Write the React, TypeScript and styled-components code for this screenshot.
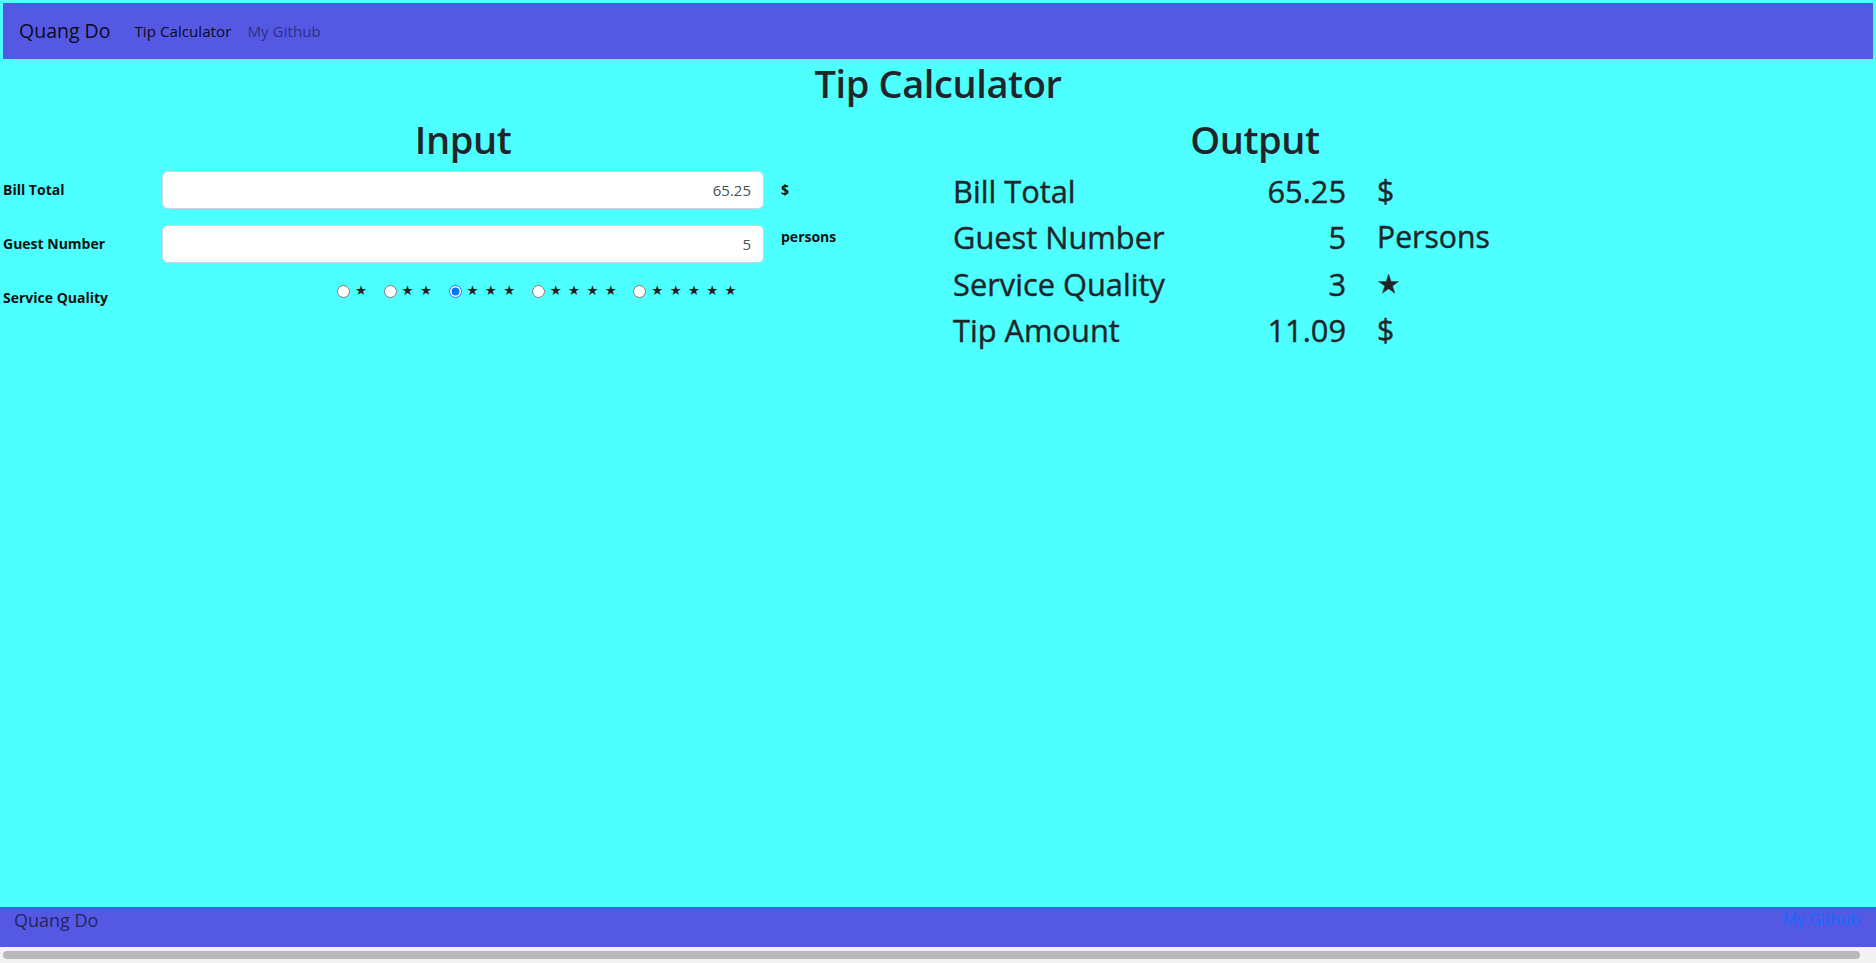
import React from "react";
import styled, { createGlobalStyle } from "styled-components";

const GlobalStyle = createGlobalStyle`
  html, body {
    margin: 0;
    padding: 0;
    height: 100%;
    overflow: hidden;
    background: #4dffff;
  }
  body {
    font-family: "Open Sans", "Noto Sans", sans-serif;
    color: #212529;
  }
  * { box-sizing: border-box; }
`;

const Shell = styled.div`
  height: 100vh;
  display: flex;
  flex-direction: column;
`;

const Main = styled.div`
  flex: 1;
  padding: 3px 3px 0 3px;
`;

const NavBar = styled.nav`
  height: 56px;
  background: #5458e3;
  display: flex;
  align-items: center;
  padding: 0 12px 0 16px;
`;

const Brand = styled.a`
  font-size: 19.5px;
  line-height: 30px;
  color: rgba(0, 0, 0, 0.9);
  text-decoration: none;
  margin-right: 16px;
`;

const NavLink = styled.a<{ $active?: boolean }>`
  font-size: 15.2px;
  line-height: 24px;
  padding: 8px;
  text-decoration: none;
  color: ${(p) => (p.$active ? "rgba(0,0,0,0.9)" : "rgba(0,0,0,0.48)")};
`;

const Title = styled.h1`
  margin: 0 0 8px;
  font-size: 38px;
  font-weight: 600;
  letter-spacing: -0.4px;
  line-height: 48px;
  text-align: center;
`;

const Columns = styled.div`
  display: grid;
  grid-template-columns: 920px 1fr;
`;

const SectionHeading = styled.h1<{ $width?: number }>`
  margin: 0 0 8px;
  font-size: 38px;
  font-weight: 600;
  letter-spacing: -0.4px;
  line-height: 48px;
  text-align: center;
  width: ${(p) => (p.$width ? `${p.$width}px` : "auto")};
`;

const FormRow = styled.div`
  display: grid;
  grid-template-columns: 159px 602px 1fr;
  align-items: start;
  margin-bottom: 16px;
`;

const FieldLabel = styled.label`
  font-size: 14px;
  font-weight: 700;
  line-height: 24px;
  padding-top: 7px;
  color: #111;
`;

const Unit = styled.span<{ $top: number }>`
  font-size: 14px;
  font-weight: 700;
  line-height: 24px;
  padding-left: 17px;
  padding-top: ${(p) => p.$top}px;
  color: #111;
`;

const TextInput = styled.input`
  width: 602px;
  height: 38px;
  border: 1px solid #ced4da;
  border-radius: 6px;
  background: #fff;
  padding: 6px 12px;
  font-family: inherit;
  font-size: 15px;
  color: #495057;
  text-align: right;
  outline: none;
`;

const RadioGroup = styled.div`
  grid-column: 2 / 4;
  display: flex;
  align-items: center;
  height: 24px;
  gap: 11.6px;
  padding-left: 170px;
`;

const RadioOption = styled.label`
  display: inline-flex;
  align-items: center;
`;

const Radio = styled.input`
  width: 13px;
  height: 13px;
  margin: 0 3px 0 5px;
`;

const Stars = styled.span`
  display: inline-flex;
  gap: 6.3px;
  margin-left: 2px;
  font-family: "DejaVu Sans", sans-serif;
  font-size: 13.4px;
  line-height: 24px;
  color: #222;
`;

const OutputColumn = styled.div`
  padding-left: 30px;
`;

const OutputGrid = styled.div`
  display: grid;
  grid-template-columns: 259px 103px auto;
  column-gap: 31px;
  margin-top: -3px;
  font-size: 30.8px;
  font-weight: 400;
  -webkit-text-stroke: 0.4px #212529;
  line-height: 46.3px;
  color: #212529;
`;

const OutLabel = styled.div``;
const OutValue = styled.div`
  text-align: right;
`;
const OutUnit = styled.div<{ $star?: boolean }>`
  font-family: ${(p) => (p.$star ? '"DejaVu Sans", sans-serif' : "inherit")};
  font-size: ${(p) => (p.$star ? "26px" : "30.2px")};
`;

const Footer = styled.footer`
  height: 40px;
  background: #5458e3;
  display: flex;
  justify-content: space-between;
  align-items: flex-start;
  padding: 0 16px 0 14px;
`;

const FooterBrand = styled.span`
  font-size: 18px;
  line-height: 27px;
  color: rgba(0, 0, 0, 0.62);
`;

const FooterLink = styled.a`
  font-size: 16px;
  line-height: 24px;
  color: #0d6efd;
  text-decoration: none;
`;

const ScrollTrack = styled.div`
  height: 16px;
  background: #f3f3f3;
  display: flex;
  align-items: center;
  padding: 0 16px 0 3px;
`;

const ScrollThumb = styled.div`
  flex: 1;
  height: 8px;
  border-radius: 4px;
  background: #b9b9b9;
`;

const rows = [
  { label: "Bill Total", value: "65.25", unit: "$" },
  { label: "Guest Number", value: "5", unit: "Persons" },
  { label: "Service Quality", value: "3", unit: "★", star: true },
  { label: "Tip Amount", value: "11.09", unit: "$" },
];

export default function App() {
  return (
    <Shell>
      <GlobalStyle />
      <Main>
        <NavBar>
          <Brand href="#">Quang Do</Brand>
          <NavLink $active href="#">
            Tip Calculator
          </NavLink>
          <NavLink href="#">My Github</NavLink>
        </NavBar>
        <Title>Tip Calculator</Title>
        <Columns>
          <div>
            <SectionHeading>Input</SectionHeading>
            <FormRow>
              <FieldLabel>Bill Total</FieldLabel>
              <TextInput type="text" defaultValue="65.25" />
              <Unit $top={7}>$</Unit>
            </FormRow>
            <FormRow>
              <FieldLabel>Guest Number</FieldLabel>
              <TextInput type="text" defaultValue="5" />
              <Unit $top={0}>persons</Unit>
            </FormRow>
            <FormRow>
              <FieldLabel>Service Quality</FieldLabel>
              <RadioGroup>
                {[1, 2, 3, 4, 5].map((n) => (
                  <RadioOption key={n}>
                    <Radio type="radio" name="quality" defaultChecked={n === 3} />
                    <Stars>
                      {Array.from({ length: n }).map((_, i) => (
                        <span key={i}>★</span>
                      ))}
                    </Stars>
                  </RadioOption>
                ))}
              </RadioGroup>
            </FormRow>
          </div>
          <OutputColumn>
            <SectionHeading $width={604}>Output</SectionHeading>
            <OutputGrid>
              {rows.map((r) => (
                <React.Fragment key={r.label}>
                  <OutLabel>{r.label}</OutLabel>
                  <OutValue>{r.value}</OutValue>
                  <OutUnit $star={r.star}>{r.unit}</OutUnit>
                </React.Fragment>
              ))}
            </OutputGrid>
          </OutputColumn>
        </Columns>
      </Main>
      <Footer>
        <FooterBrand>Quang Do</FooterBrand>
        <FooterLink href="#">My Github</FooterLink>
      </Footer>
      <ScrollTrack>
        <ScrollThumb />
      </ScrollTrack>
    </Shell>
  );
}
